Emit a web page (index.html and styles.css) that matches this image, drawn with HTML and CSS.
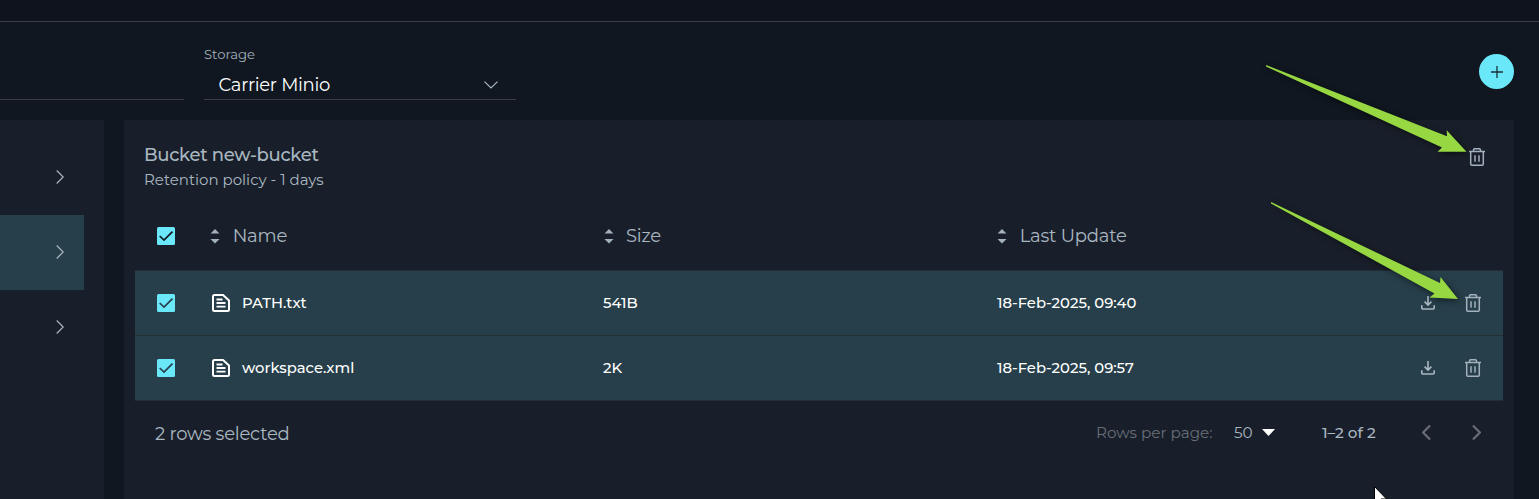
FILE: index.html
```html
<!DOCTYPE html>
<html lang="en">
<head>
<meta charset="utf-8">
<title>Artifacts</title>
<link rel="stylesheet" href="styles.css">
</head>
<body>
<svg class="defs" width="0" height="0" aria-hidden="true">
  <symbol id="check" viewBox="0 0 18 18"><rect width="18" height="18" rx="1.5" fill="#6ae8fa"/><path d="M2.700 9 7 13 15.500 4.700" fill="none" stroke="currentColor" stroke-width="1.7"/></symbol>
  <symbol id="sort" viewBox="0 0 10 16"><path d="M.5 5.500 5 1l4.500 4.500zM.5 11h9L5 15.500z" fill="#a3b0bd"/></symbol>
  <symbol id="doc" viewBox="0 0 18 18"><path d="M2.500 1H11l6 5.500V15.500a1.500 1.500 0 0 1-1.500 1.500h-13A1.500 1.500 0 0 1 1 15.500v-13A1.500 1.500 0 0 1 2.500 1z" fill="none" stroke="#fff" stroke-width="2"/><path d="M4.500 5.500h6M4.500 9h9M4.500 12.700h9" stroke="#fff" stroke-width="1.800"/></symbol>
  <symbol id="trash" viewBox="0 0 16 18"><path d="M0 3.500h16M4.500 3.500V2a1.300 1.300 0 0 1 1.300-1.300h4.400A1.300 1.300 0 0 1 11.500 2v1.500M1.700 3.500v12.500a1.300 1.300 0 0 0 1.300 1.300h10a1.300 1.300 0 0 0 1.300-1.300V3.500M6 7.300v6.500M10 7.300v6.500" fill="none" stroke="#a3b0bd" stroke-width="1.500"/></symbol>
  <symbol id="download" viewBox="0 0 14 14"><path d="M7 0v8.500M3.600 5.600 7 9l3.400-3.400M.8 9.300v2.700a1 1 0 0 0 1 1h10.400a1 1 0 0 0 1-1V9.300" fill="none" stroke="#a9b7c1" stroke-width="1.600"/></symbol>
  <symbol id="next" viewBox="0 0 8 14"><path d="M.7.500 7.200 7 .7 13.500" fill="none" stroke="currentColor" stroke-width="var(--w, 1.200)"/></symbol>
</svg>

<div class="topbar"></div>
<div class="toolbar">
  <div class="field field-cut"></div>
  <div class="field storage">
    <span class="label">Storage</span>
    <div class="select"><span class="value">Carrier Minio</span><svg class="caret" viewBox="0 0 14 8"><path d="M.5.600 7 7 13.500.600" fill="none" stroke="#a9b7c1" stroke-width="1.200"/></svg></div>
  </div>
  <button class="add" aria-label="Add"><svg width="12" height="12" viewBox="0 0 12 12"><path d="M0 6h12M6 0v12" stroke="#18313c" stroke-width="1.300"/></svg></button>
</div>

<div class="content">
  <aside class="buckets">
    <div class="bucket"><svg class="chev"><use href="#next"/></svg></div>
    <div class="bucket active"><svg class="chev"><use href="#next"/></svg></div>
    <div class="bucket"><svg class="chev"><use href="#next"/></svg></div>
  </aside>
  <main class="panel">
    <header class="head">
      <div><h1 class="title">Bucket new-bucket</h1><p class="policy">Retention policy - 1 days</p></div>
      <svg class="trash"><use href="#trash"/></svg>
    </header>
    <div class="table">
      <div class="row thead">
        <svg class="check"><use href="#check"/></svg>
        <div class="th"><svg class="sort"><use href="#sort"/></svg><span>Name</span></div>
        <div class="th th-size"><svg class="sort"><use href="#sort"/></svg><span>Size</span></div>
        <div class="th"><svg class="sort"><use href="#sort"/></svg><span>Last Update</span></div>
      </div>
      <div class="row item">
        <svg class="check"><use href="#check"/></svg>
        <div class="file"><svg class="doc"><use href="#doc"/></svg><span>PATH.txt</span></div>
        <span>541B</span>
        <span>18-Feb-2025, 09:40</span>
        <div class="actions"><svg class="download"><use href="#download"/></svg><svg class="trash"><use href="#trash"/></svg></div>
      </div>
      <div class="row item">
        <svg class="check"><use href="#check"/></svg>
        <div class="file"><svg class="doc"><use href="#doc"/></svg><span>workspace.xml</span></div>
        <span>2K</span>
        <span>18-Feb-2025, 09:57</span>
        <div class="actions"><svg class="download"><use href="#download"/></svg><svg class="trash"><use href="#trash"/></svg></div>
      </div>
    </div>
    <footer class="foot">
      <span class="selected">2 rows selected</span>
      <span class="perpage">Rows per page:</span>
      <span class="count">50</span>
      <svg class="drop" viewBox="0 0 13 7"><path d="M0 0h13L6.500 7z" fill="#fff"/></svg>
      <span class="range">1–2 of 2</span>
      <svg class="page prev"><use href="#next"/></svg>
      <svg class="page"><use href="#next"/></svg>
    </footer>
  </main>
</div>

<svg class="overlay" viewBox="0 0 1539 499" aria-hidden="true">
  <g class="arrows">
    <path d="M1266 65 1447 136.300 1446.700 130.300 1466.500 151.700 1437.500 151.700 1442 147.500 1266 66.500z"/>
    <path d="M1271 202 1440 283 1440.500 277 1458 299 1429.500 297.500 1434.500 293.500 1271 203.500z"/>
  </g>
  <path d="M1374.500 486.500v17l4-3.500 2.500 5.500 2.500-1-2.500-5.500h5.500z" fill="#fff" stroke="#000" stroke-width="1"/>
</svg>
</body>
</html>
```
FILE: styles.css
```css
* { box-sizing: border-box; }
body {
  margin: 0;
  height: 499px;
  overflow: hidden;
  display: flex;
  flex-direction: column;
  background: #101720;
  color: #a9b7c1;
  font-family: Montserrat, Inter, sans-serif;
  font-size: 15.2px;
}
svg { display: block; flex: none; }
span { white-space: nowrap; }
.defs { position: absolute; }
.topbar { height: 22px; flex: none; background: #0e131d; border-bottom: 1px solid #3b3e46; }
.toolbar { display: flex; height: 98px; flex: none; padding: 0 25px 20px 0; gap: 20px; }
.field { border-bottom: 1px solid #3b3e46; }
.field-cut { width: 184px; }
.storage { width: 312px; padding-top: 24px; }
.label { display: block; font-size: 13.2px; line-height: 17px; color: #a3b0bd; }
.select { display: flex; justify-content: space-between; align-items: center; height: 24px; margin-top: 10px; padding: 0 18px 0 14.5px; }
.value { font-size: 18px; color: #fff; font-weight: 450; letter-spacing: -.3px; }
.caret { width: 14px; height: 8px; }
.add { margin: 32px 0 0 auto; width: 35px; height: 35px; padding: 0; border: 0; border-radius: 50%; background: #6ae8fa; display: grid; place-items: center; }
.content { display: flex; flex: 1; gap: 20px; padding-right: 25px; }
.buckets { width: 104px; background: #191f2a; padding: 20px 20px 0 0; }
.bucket { height: 75px; display: flex; align-items: center; justify-content: flex-end; padding: 0 20.500px 1px 0; }
.active { background: #273f4a; }
.chev { width: 8px; height: 14px; }
.panel { flex: 1; background: #191f2a; padding: 24px 11px 0; }
.head { display: flex; justify-content: space-between; height: 58px; padding: 0 18px 0 9px; }
.title { margin: 0; font-size: 18px; line-height: 22px; font-weight: 500; letter-spacing: -.3px; }
.policy { margin: 4px 0 0; font-size: 15px; line-height: 20px; }
.trash { width: 16px; height: 18px; }
.head .trash { margin-top: 4px; }
.row { display: grid; grid-template-columns: 75px 393px 394px 1fr auto; align-items: center; height: 65px; border-bottom: 1px solid #252e34; }
.thead { height: 69px; color: #a9b7c1; border-bottom-color: #252b36; }
.check { width: 18px; height: 18px; margin-left: 22px; color: #101720; }
.th { display: flex; align-items: center; gap: 12.700px; font-size: 18px; letter-spacing: -.2px; }
.th-size { padding-left: 1px; gap: 12px; }
.sort { width: 10px; height: 16px; }
.item { background: #273f4a; color: #fff; font-size: 14.800px; font-weight: 500; }
.item .check { color: #273f4a; }
.file { display: flex; align-items: center; gap: 12px; padding-left: 2px; }
.doc { width: 18px; height: 18px; }
.actions { display: flex; align-items: center; gap: 30px; padding-right: 22px; }
.download { width: 14px; height: 14px; }
.foot { display: flex; align-items: center; height: 63px; padding: 0 22px 0 20px; }
.selected { font-size: 18px; letter-spacing: -.22px; padding-top: 2px; }
.perpage { width: 117px; margin-left: auto; color: #686e78; }
.count { width: 20px; margin-left: 21px; }
.drop { width: 13px; height: 7px; margin-left: 8px; }
.range { width: 54px; margin-left: 47px; font-weight: 500; }
.page { width: 9px; height: 15px; color: #686e78; --w: 2; margin-left: 41px; overflow: visible; }
.prev { transform: scaleX(-1); margin-left: 46px; }
.overlay { position: absolute; left: 0; top: 0; width: 1539px; height: 499px; pointer-events: none; }
.arrows { fill: #96d742; filter: drop-shadow(2px 2px 3px rgb(0 0 0 / .55)); }
```
